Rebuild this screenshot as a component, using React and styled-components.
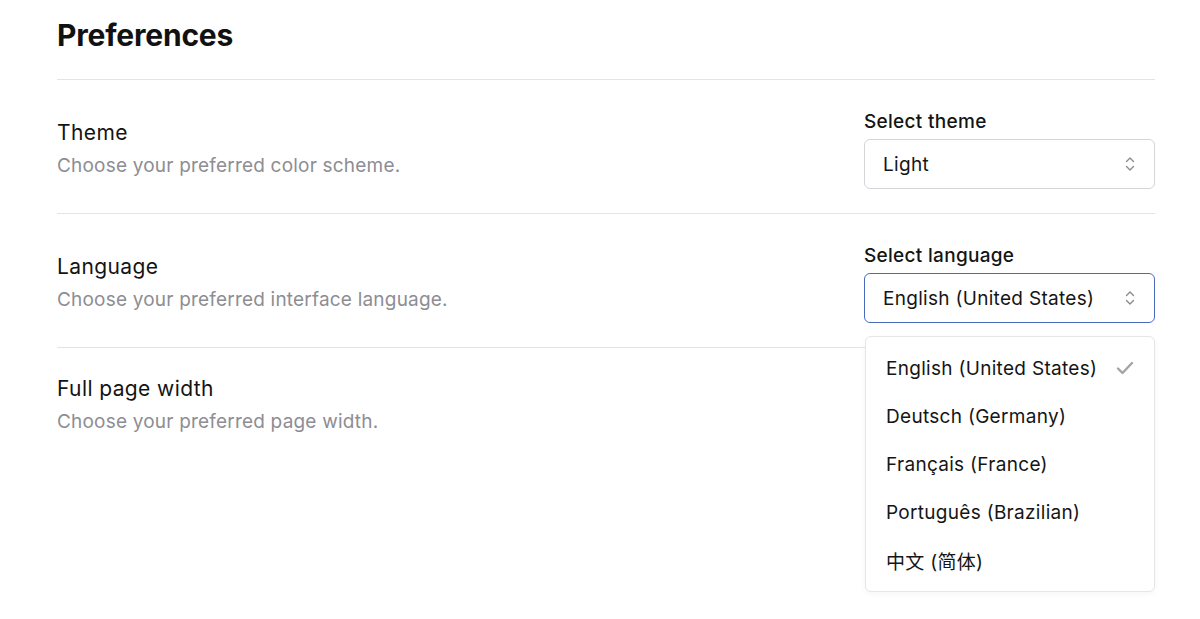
import React from 'react';
import styled, { createGlobalStyle } from 'styled-components';

const GlobalStyle = createGlobalStyle`
  html, body {
    margin: 0;
    background: #ffffff;
    font-family: Inter, "Noto Sans", "Noto Sans CJK SC", sans-serif;
    color: #111111;
  }
`

const Page = styled.div`
  min-height: 619px;
  box-sizing: border-box;
  padding: 16px 45px 0 57px;
`

const Title = styled.h1`
  margin: 0;
  font-size: 30px;
  font-weight: 700;
  letter-spacing: -0.2px;
  line-height: 38px;
  padding-bottom: 25px;
  border-bottom: 1px solid #e3e3e8;
`

const Row = styled.section`
  display: flex;
  align-items: center;
  justify-content: space-between;
  padding: ${p => p.$last ? '28px 0' : '31px 0 24px'};
  border-bottom: ${p => p.$last ? 'none' : '1px solid #e3e3e8'};
`

const Info = styled.div`
  display: flex;
  flex-direction: column;
  gap: 8px;
  margin-bottom: ${p => p.$last ? '0' : '3px'};
`

const Label = styled.div`
  font-size: 21px;
  line-height: 26px;
  letter-spacing: 0.4px;
  color: #141414;
`

const Description = styled.div`
  font-size: 19px;
  line-height: 24px;
  letter-spacing: 0.2px;
  color: #8d8d93;
`

const Control = styled.div`
  position: relative;
  width: 291px;
  display: flex;
  flex-direction: column;
  gap: 6px;
`

const ControlLabel = styled.div`
  font-size: 19px;
  font-weight: 500;
  line-height: 22px;
  letter-spacing: 0.3px;
  color: #141414;
`

const Select = styled.div`
  box-sizing: border-box;
  height: 50px;
  display: flex;
  align-items: center;
  justify-content: space-between;
  padding: 0 18px 0 18px;
  border: 1px solid ${p => p.$focused ? '#4a6bbd' : '#d4d4d9'};
  border-radius: 6px;
  font-size: 19px;
  letter-spacing: 0.3px;
  color: #151515;
  background: #fff;
`

const Menu = styled.ul`
  position: absolute;
  top: 91px;
  left: 1px;
  right: 0;
  margin: 0;
  padding: 7px 0;
  list-style: none;
  background: #fff;
  border: 1px solid #e6e6ea;
  border-radius: 6px;
  box-shadow: 0 2px 6px rgba(0, 0, 0, 0.04);
  z-index: 2;
`

const Option = styled.li`
  height: 48px;
  display: flex;
  align-items: center;
  justify-content: space-between;
  padding: 0 20px 0 20px;
  font-size: 19px;
  letter-spacing: 0.3px;
  color: #151515;
`

const ChevronsIcon = () => (
  <svg width="12" height="18" viewBox="0 0 12 18" fill="none" stroke="#8a8a90" strokeWidth="1.4" strokeLinecap="round" strokeLinejoin="round">
    <path d="M2.5 6.5 L6 3 L9.5 6.5" />
    <path d="M2.5 11.5 L6 15 L9.5 11.5" />
  </svg>
)

const CheckIcon = () => (
  <svg width="18" height="14" viewBox="0 0 18 14" fill="none" stroke="#a3a3a8" strokeWidth="2.4" strokeLinecap="round" strokeLinejoin="round">
    <path d="M2 7.5 L6.5 12 L16 2" />
  </svg>
)

const languages = [
  "English (United States)",
  "Deutsch (Germany)",
  "Français (France)",
  "Português (Brazilian)",
  "中文 (简体)",
]

const App = () => {
  return (
    <Page>
      <GlobalStyle />
      <Title>Preferences</Title>

      <Row>
        <Info>
          <Label>Theme</Label>
          <Description>Choose your preferred color scheme.</Description>
        </Info>
        <Control>
          <ControlLabel>Select theme</ControlLabel>
          <Select>
            Light
            <ChevronsIcon />
          </Select>
        </Control>
      </Row>

      <Row>
        <Info>
          <Label>Language</Label>
          <Description>Choose your preferred interface language.</Description>
        </Info>
        <Control>
          <ControlLabel>Select language</ControlLabel>
          <Select $focused>
            English (United States)
            <ChevronsIcon />
          </Select>
          <Menu>
            {languages.map((lang, i) => (
              <Option key={lang}>
                {lang}
                {i === 0 && <CheckIcon />}
              </Option>
            ))}
          </Menu>
        </Control>
      </Row>

      <Row $last>
        <Info $last>
          <Label>Full page width</Label>
          <Description>Choose your preferred page width.</Description>
        </Info>
      </Row>
    </Page>
  );
}

export default App;
